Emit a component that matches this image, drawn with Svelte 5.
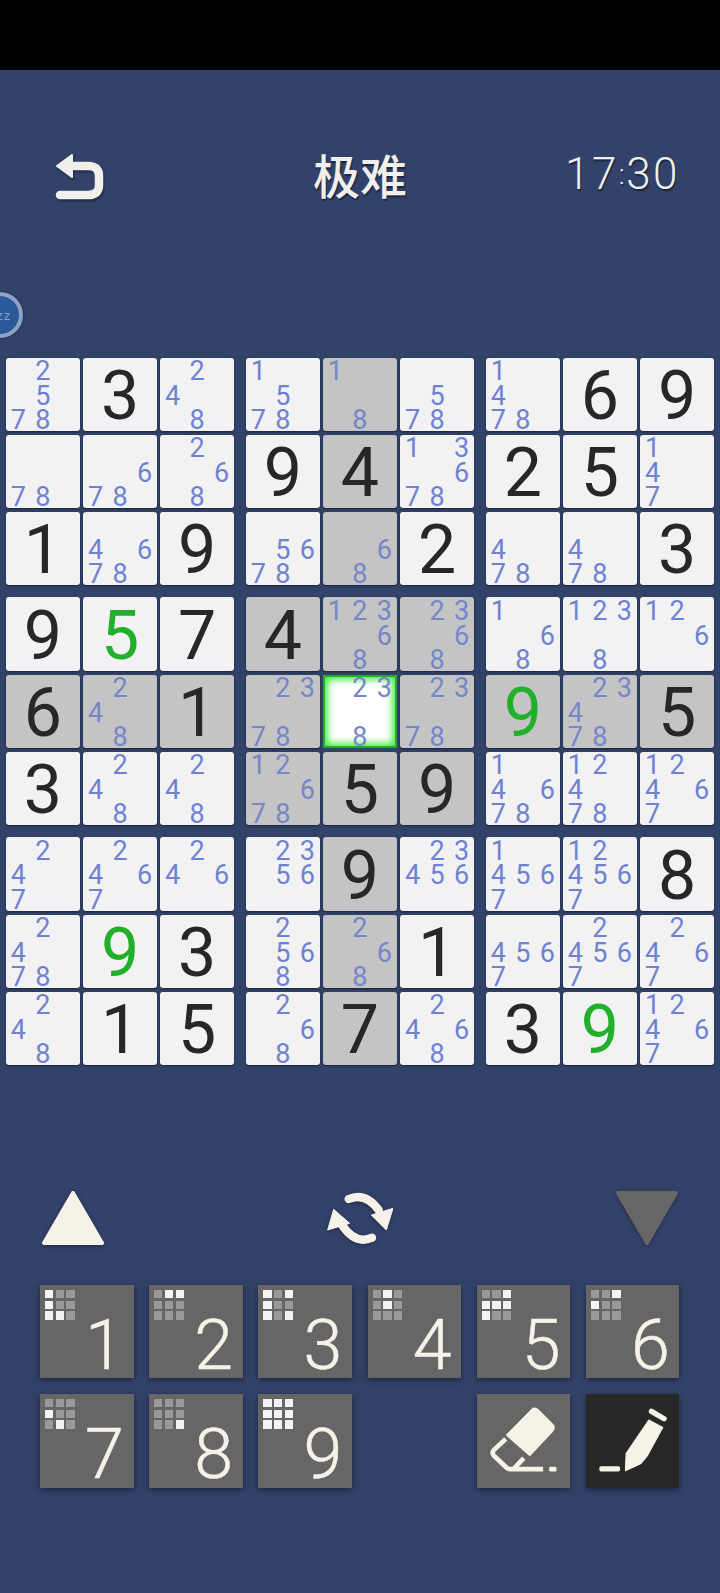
<script>
  // '.' marks pencil notes, 'g' marks a correctly placed digit
  const rows = [
    '.2578 3 .248 .1578 .18 .578 .1478 6 9',
    '.78 .678 .268 9 4 .13678 2 5 .147',
    '1 .4678 9 .5678 .68 2 .478 .478 3',
    '9 g5 7 4 .12368 .2368 .168 .1238 .126',
    '6 .248 1 .2378 .238 .2378 g9 .23478 5',
    '3 .248 .248 .12678 5 9 .14678 .12478 .12467',
    '.247 .2467 .246 .2356 9 .23456 .14567 .124567 8',
    '.2478 g9 3 .2568 .268 1 .4567 .24567 .2467',
    '.248 1 5 .268 7 .2468 3 g9 .12467'
  ].map((r) => r.split(' '));

  const selRow = 4;
  const selCol = 4;
  const nine = [1, 2, 3, 4, 5, 6, 7, 8, 9];
  const blocks = [0, 1, 2, 3, 4, 5, 6, 7, 8];

  // which small squares are lit on each number key
  const keys = [
    { n: 1, lit: [1, 4, 7, 8] },
    { n: 2, lit: [2, 3] },
    { n: 3, lit: [1, 3, 4, 7, 9] },
    { n: 4, lit: [2, 5] },
    { n: 5, lit: [3, 4, 5, 6, 7] },
    { n: 6, lit: [3, 4] },
    { n: 7, lit: [4, 8] },
    { n: 8, lit: [9] },
    { n: 9, lit: nine }
  ];

  function cellAt(block, i) {
    const r = Math.floor(block / 3) * 3 + Math.floor(i / 3);
    const c = (block % 3) * 3 + (i % 3);
    const sameBox = Math.floor(r / 3) === Math.floor(selRow / 3) && Math.floor(c / 3) === Math.floor(selCol / 3);
    return {
      val: rows[r][c],
      selected: r === selRow && c === selCol,
      shaded: r === selRow || c === selCol || sameBox
    };
  }
</script>

{#snippet notes(val)}
  <div class="notes">
    {#each nine as n}
      <span>{val.includes(String(n)) ? n : ''}</span>
    {/each}
  </div>
{/snippet}

<div class="page">
  <div class="status"></div>

  <header>
    <svg class="back" viewBox="0 0 90 70" aria-label="back">
      <path d="M27 25H48Q59 25 59 35V44Q59 54 48 54H20" fill="none" stroke="#f0efec" stroke-width="8.5" stroke-linecap="round" />
      <path d="M17 25L32 14V36Z" fill="#f0efec" stroke="#f0efec" stroke-width="2" stroke-linejoin="round" />
    </svg>
    <div class="title">极难</div>
    <div class="timer">17<span class="colon">:</span>30</div>
  </header>

  <div class="sleep"><span>zzz</span></div>

  <div class="board">
    {#each blocks as b}
      <div class="block">
        {#each blocks as i}
          {@const cell = cellAt(b, i)}
          <div class="cell" class:shaded={cell.shaded} class:selected={cell.selected}>
            {#if cell.val[0] === '.'}
              {@render notes(cell.val)}
            {:else if cell.val[0] === 'g'}
              <span class="digit good">{cell.val[1]}</span>
            {:else}
              <span class="digit">{cell.val}</span>
            {/if}
          </div>
        {/each}
      </div>
    {/each}
  </div>

  <div class="controls">
    <svg viewBox="0 0 66 56">
      <polygon points="33,3 62,53 4,53" fill="#f6f2e8" stroke="#f6f2e8" stroke-width="4" stroke-linejoin="round" />
    </svg>
    <svg class="refresh" viewBox="50 40 198 168">
      <path d="M115 67Q165 45 205 100" fill="none" stroke="#f6f2e8" stroke-width="25" stroke-linecap="round" />
      <polygon points="183,115 248,95 228,160" fill="#f6f2e8" stroke="#f6f2e8" stroke-width="3" stroke-linejoin="round" />
      <path d="M185 183Q135 205 95 145" fill="none" stroke="#f6f2e8" stroke-width="25" stroke-linecap="round" />
      <polygon points="52,160 70,98 118,140" fill="#f6f2e8" stroke="#f6f2e8" stroke-width="3" stroke-linejoin="round" />
    </svg>
    <svg class="down" viewBox="0 0 66 56">
      <polygon points="4,3 62,3 33,53" fill="#666" stroke="#666" stroke-width="4" stroke-linejoin="round" />
    </svg>
  </div>

  <div class="keypad">
    {#each keys as k}
      <div class="key">
        <div class="mini">
          {#each nine as n}
            <i class:lit={k.lit.includes(n)}></i>
          {/each}
        </div>
        <span class="num">{k.n}</span>
      </div>
    {/each}

    <div class="key tool eraser">
      <svg viewBox="0 0 280 280">
        <path d="M168 44Q176 42 182 48L226 92Q234 100 226 110L158 183L90 123Z" fill="#f6f2e8" stroke="#f6f2e8" stroke-width="6" stroke-linejoin="round" />
        <path d="M86 135L50 168Q44 176 50 184L88 220Q92 225 100 225H198M140 192L112 222" fill="none" stroke="#f6f2e8" stroke-width="14" stroke-linejoin="round" />
        <rect x="216" y="218" width="22" height="14" rx="4" fill="#f6f2e8" />
      </svg>
    </div>
    <div class="key tool dark">
      <svg viewBox="0 0 280 280">
        <path d="M196 52L234 74" stroke="#f6f2e8" stroke-width="16" stroke-linecap="round" />
        <polygon points="188,78 230,100 185,183 165,208 118,230 120,178" fill="#f6f2e8" stroke="#f6f2e8" stroke-width="3" stroke-linejoin="round" />
        <rect x="40" y="216" width="62" height="16" rx="5" fill="#f6f2e8" />
      </svg>
    </div>
  </div>
</div>

<style>
  :global(body) {
    margin: 0;
    background: #334268;
  }

  .page {
    position: relative;
    width: 720px;
    height: 1593px;
    overflow: hidden;
    background: #334268;
    font-family: Roboto, "Noto Sans CJK SC", sans-serif;
  }

  .status {
    height: 70px;
    background: #000;
  }

  header {
    display: grid;
    grid-template-columns: 1fr auto 1fr;
    align-items: center;
    height: 44px;
    padding: 84px 40px 0 40px;
    color: #f0efec;
  }

  .back {
    width: 90px;
    height: 70px;
    margin: -13px 0;
    filter: drop-shadow(1px 2px 1px rgba(20, 25, 50, 0.6));
  }

  .title {
    margin-top: -5px;
    font-family: "Noto Sans CJK SC", sans-serif;
    font-size: 47px;
    line-height: 44px;
    font-weight: 500;
    text-shadow: 1px 2px 1px rgba(20, 25, 50, 0.7);
  }

  .timer {
    justify-self: end;
    margin-top: -3px;
    font-size: 44px;
    line-height: 44px;
    font-weight: 300;
    letter-spacing: 2.5px;
    text-shadow: 1px 2px 1px rgba(20, 25, 50, 0.7);
  }

  .colon {
    font-size: 28px;
    vertical-align: 5px;
    letter-spacing: 1.5px;
  }

  .sleep {
    position: absolute;
    left: -23px;
    top: 292px;
    width: 46px;
    height: 46px;
    box-sizing: border-box;
    display: flex;
    align-items: center;
    justify-content: center;
    border-radius: 50%;
    background: #2a5a9a;
    border: 4px solid #8fa3c6;
    box-shadow: 0 0 3px rgba(20, 25, 50, 0.6);
    color: #7f9cc9;
    font-size: 13px;
    letter-spacing: 1px;
  }

  .board {
    display: grid;
    grid-template-columns: repeat(3, auto);
    justify-content: start;
    gap: 12px;
    margin: 159.5px 0 0 6px;
  }

  .block {
    display: grid;
    grid-template-columns: repeat(3, 73.6px);
    grid-auto-rows: 73.6px;
    gap: 3.6px;
  }

  .cell {
    position: relative;
    display: flex;
    align-items: center;
    justify-content: center;
    border-radius: 3px;
    background: #f2f2f2;
    box-shadow: 0 1px 2px rgba(15, 20, 40, 0.7);
  }

  .cell.shaded {
    background: #c4c4c4;
  }

  .cell.selected {
    background: #fff;
    box-shadow: inset 0 0 0 2px #1fae25, inset 0 0 7px 5px #4ee84e;
  }

  .digit {
    margin-top: 3px;
    font-size: 68px;
    line-height: 1;
    font-weight: 400;
    color: #272727;
  }

  .digit.good {
    color: #22b02c;
  }

  .notes {
    display: grid;
    grid-template-columns: repeat(3, 24.5px);
    grid-auto-rows: 24.5px;
    width: 73.5px;
    margin-top: 3px;
    font-size: 27px;
    font-weight: 400;
    line-height: 24.5px;
    text-align: center;
    color: #6f82d2;
  }

  .shaded .notes {
    color: #7587c8;
  }

  .controls {
    display: flex;
    justify-content: space-between;
    height: 56px;
    margin-top: 124.5px;
    padding: 0 40px;
  }

  .controls svg {
    width: 66px;
    height: 56px;
    filter: drop-shadow(0 1px 2px rgba(20, 25, 50, 0.6));
  }

  .keypad {
    display: grid;
    grid-template-columns: repeat(6, 93.5px);
    grid-auto-rows: 93.5px;
    gap: 15.7px;
    margin-top: 39px;
    padding-left: 40px;
  }

  .key {
    position: relative;
    display: flex;
    align-items: flex-end;
    justify-content: flex-end;
    background: #666;
    box-shadow: 0 2px 6px rgba(20, 25, 50, 0.7);
  }

  .mini {
    position: absolute;
    left: 5px;
    top: 5px;
    display: grid;
    grid-template-columns: repeat(3, 8.3px);
    grid-auto-rows: 8.3px;
    gap: 2.4px;
  }

  .mini i {
    background: #999;
  }

  .mini i.lit {
    background: #f3f3f3;
  }

  .num {
    width: 40px;
    margin: 0 9px -3px 0;
    font-size: 70px;
    line-height: 1.02;
    font-weight: 300;
    text-align: center;
    color: #f6f2e8;
    -webkit-text-stroke: 0.5px #f6f2e8;
  }

  .tool {
    display: block;
  }

  .tool svg {
    display: block;
    width: 100%;
    height: 100%;
  }

  .tool.dark {
    background: #282828;
  }

  .eraser {
    grid-column: 5;
  }
</style>
